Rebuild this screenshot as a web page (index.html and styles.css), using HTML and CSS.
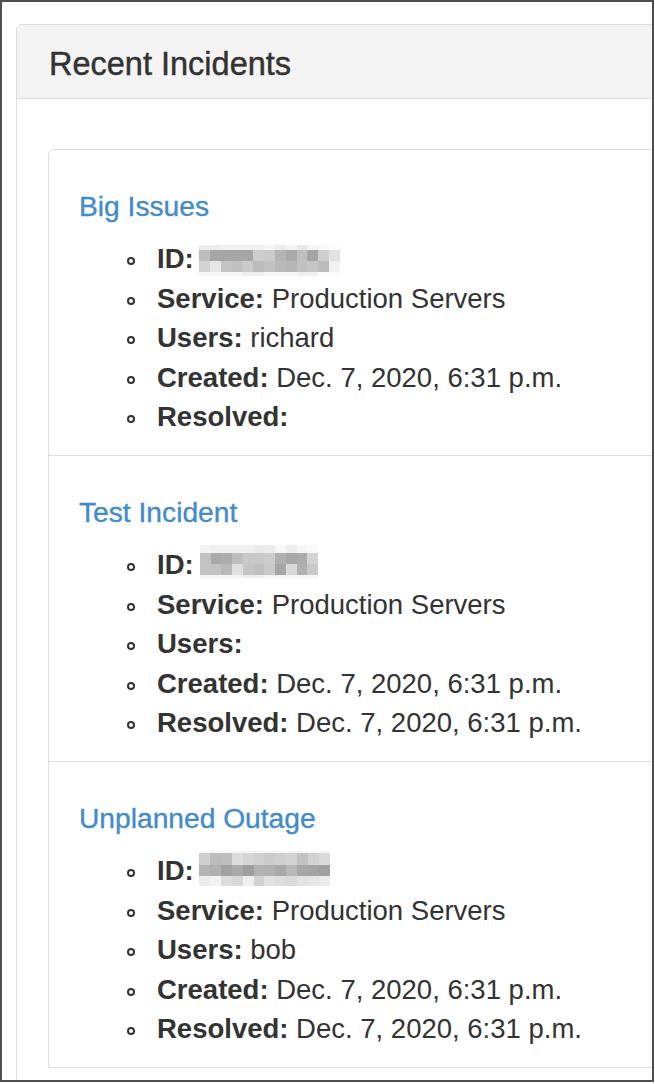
FILE: index.html
```html
<!DOCTYPE html>
<html lang="en">
<head>
<meta charset="utf-8">
<title>Recent Incidents</title>
<link rel="stylesheet" href="styles.css">
</head>
<body>
<div class="frame">
  <div class="panel">
    <div class="panel-heading">
      <h3 class="panel-title">Recent Incidents</h3>
    </div>
    <div class="panel-body">
      <div class="list-group">
        <div class="list-group-item">
          <h4 class="incident-title"><a href="#">Big Issues</a></h4>
          <ul class="incident-details">
            <li><strong>ID:</strong> <span class="redacted redacted-1"></span></li>
            <li><strong>Service:</strong> Production Servers</li>
            <li><strong>Users:</strong> richard</li>
            <li><strong>Created:</strong> Dec. 7, 2020, 6:31 p.m.</li>
            <li><strong>Resolved:</strong> </li>
          </ul>
        </div>
        <div class="list-group-item">
          <h4 class="incident-title"><a href="#">Test Incident</a></h4>
          <ul class="incident-details">
            <li><strong>ID:</strong> <span class="redacted redacted-2"></span></li>
            <li><strong>Service:</strong> Production Servers</li>
            <li><strong>Users:</strong> </li>
            <li><strong>Created:</strong> Dec. 7, 2020, 6:31 p.m.</li>
            <li><strong>Resolved:</strong> Dec. 7, 2020, 6:31 p.m.</li>
          </ul>
        </div>
        <div class="list-group-item">
          <h4 class="incident-title"><a href="#">Unplanned Outage</a></h4>
          <ul class="incident-details">
            <li><strong>ID:</strong> <span class="redacted redacted-3"></span></li>
            <li><strong>Service:</strong> Production Servers</li>
            <li><strong>Users:</strong> bob</li>
            <li><strong>Created:</strong> Dec. 7, 2020, 6:31 p.m.</li>
            <li><strong>Resolved:</strong> Dec. 7, 2020, 6:31 p.m.</li>
          </ul>
        </div>
      </div>
    </div>
  </div>
</div>
</body>
</html>
```

FILE: styles.css
```css
html, body {
  margin: 0;
  padding: 0;
  background: #fff;
}

body {
  font-family: "Liberation Sans", Arial, Helvetica, sans-serif;
  color: #333;
}

.frame {
  box-sizing: border-box;
  width: 654px;
  height: 1082px;
  border: 2px solid #505050;
  background: #fff;
  overflow: hidden;
  padding: 22px 0 0 14px;
}

.panel {
  width: 700px;
  border: 1px solid #dddddd;
  border-radius: 6px 0 0 0;
  background: #fff;
}

.panel-heading {
  background: #f4f4f4;
  border-bottom: 1px solid #dddddd;
  border-radius: 5px 0 0 0;
  padding: 22px 30px 16px 32px;
}

.panel-title {
  margin: 0;
  font-size: 32.5px;
  line-height: 35px;
  font-weight: 400;
  color: #333;
  -webkit-text-stroke: 0.45px #333;
}

.panel-body {
  padding: 50px 0 40px 31px;
}

.list-group {
  display: flex;
  flex-direction: column;
}

.list-group-item {
  border: 1px solid #dddddd;
  margin-bottom: -1px;
  padding: 20px 30px 18px 30px;
  font-size: 27.5px;
}

.list-group-item:first-child {
  border-radius: 6px 0 0 0;
}

.incident-title {
  margin: 21px 0 18px;
  font-size: 28.2px;
  line-height: 30px;
  font-weight: 400;
  -webkit-text-stroke: 0.35px #428bca;
}

.incident-title a {
  color: #428bca;
  text-decoration: none;
}

.incident-details {
  list-style: none;
  margin: 0;
  padding: 0 0 0 78px;
  line-height: 39.6px;
}

.incident-details li {
  position: relative;
  white-space: nowrap;
}

.incident-details li::before {
  content: "";
  position: absolute;
  left: -30px;
  top: 18px;
  width: 8px;
  height: 8px;
  box-sizing: border-box;
  border: 2px solid #333;
  border-radius: 50%;
}

.incident-details strong {
  font-weight: 700;
}

.redacted {
  display: inline-block;
  vertical-align: top;
  background-repeat: no-repeat;
}

.redacted-1 {
  width: 141px;
  height: 31px;
  margin-top: 6px;
  margin-left: -2px;
  background-image:
    linear-gradient(90deg, #ececec 0 15.38%, #f0f0f0 15.38% 46.15%, #f5f5f5 46.15% 53.85%, #ececec 53.85% 61.54%, #f3f3f3 61.54% 69.23%, #e8e8e8 69.23% 76.92%, #f5f5f5 76.92% 84.62%, #f8f8f8 84.62% 92.31%, #fdfdfd 92.31% 100%),
    linear-gradient(90deg, #bdbdbd 0 7.69%, #a6a6a6 7.69% 38.46%, #cdcdcd 38.46% 46.15%, #cbcbcb 46.15% 53.85%, #b4b4b4 53.85% 61.54%, #a9a9a9 61.54% 69.23%, #c0c0c0 69.23% 76.92%, #a5a5a5 76.92% 84.62%, #cfcfcf 84.62% 92.31%, #e2e2e2 92.31% 100%),
    linear-gradient(90deg, #d2d2d2 0 7.69%, #e6e6e6 7.69% 15.38%, #c3c3c3 15.38% 23.08%, #c0c0c0 23.08% 30.77%, #cbcbcb 30.77% 38.46%, #bcbcbc 38.46% 46.15%, #c2c2c2 46.15% 53.85%, #bababa 53.85% 61.54%, #b7b7b7 61.54% 69.23%, #c1c1c1 69.23% 76.92%, #c6c6c6 76.92% 84.62%, #bcbcbc 84.62% 92.31%, #f2f2f2 92.31% 100%),
    linear-gradient(90deg, #f6f6f6 0 30.77%, #efefef 30.77% 46.15%, #f6f6f6 46.15% 69.23%, #f0f0f0 69.23% 84.62%, #fbfbfb 84.62% 100%);
  background-size: 100% 5px, 100% 11px, 100% 11px, 100% 4px;
  background-position: 0 0, 0 5px, 0 16px, 0 27px;
}

.redacted-2 {
  width: 118px;
  height: 33px;
  margin-top: 0;
  margin-left: -1px;
  background-image:
    linear-gradient(90deg, #f3f3f3 0 9.09%, #f0f0f0 9.09% 45.45%, #eaeaea 45.45% 54.55%, #ececec 54.55% 63.64%, #f6f6f6 63.64% 72.73%, #ededed 72.73% 81.82%, #f5f5f5 81.82% 90.91%, #fafafa 90.91% 100%),
    linear-gradient(90deg, #c2c2c2 0 9.09%, #a9a9a9 9.09% 18.18%, #acacac 18.18% 27.27%, #bebebe 27.27% 36.36%, #c9c9c9 36.36% 54.55%, #cdcdcd 54.55% 63.64%, #b0b0b0 63.64% 72.73%, #a8a8a8 72.73% 81.82%, #ababab 81.82% 90.91%, #d4d4d4 90.91% 100%),
    linear-gradient(90deg, #c4c4c4 0 9.09%, #c3c3c3 9.09% 18.18%, #b8b8b8 18.18% 27.27%, #e0e0e0 27.27% 36.36%, #c5c5c5 36.36% 45.45%, #c0c0c0 45.45% 54.55%, #c9c9c9 54.55% 63.64%, #a5a5a5 63.64% 72.73%, #dadada 72.73% 81.82%, #b1b1b1 81.82% 90.91%, #c9c9c9 90.91% 100%),
    linear-gradient(90deg, #f4f4f4 0 36.36%, #eeeeee 36.36% 54.55%, #f5f5f5 54.55% 100%);
  background-size: 100% 8px, 100% 11px, 100% 11px, 100% 3px;
  background-position: 0 0, 0 8px, 0 19px, 0 30px;
}

.redacted-3 {
  width: 131px;
  height: 36px;
  margin-top: 0;
  margin-left: -2px;
  background-image:
    linear-gradient(90deg, #f5f5f5 0 100%),
    linear-gradient(90deg, #cfcfcf 0 8.33%, #bcbcbc 8.33% 16.67%, #bebebe 16.67% 25%, #dcdcdc 25% 33.33%, #d5d5d5 33.33% 41.67%, #d0d0d0 41.67% 50%, #cbcbcb 50% 58.33%, #cfcfcf 58.33% 66.67%, #d3d3d3 66.67% 75%, #c2c2c2 75% 83.33%, #d2d2d2 83.33% 91.67%, #dadada 91.67% 100%),
    linear-gradient(90deg, #b5b5b5 0 8.33%, #b0b0b0 8.33% 16.67%, #a2a2a2 16.67% 25%, #ababab 25% 33.33%, #9f9f9f 33.33% 41.67%, #b3b3b3 41.67% 50%, #b0b0b0 50% 58.33%, #a9a9a9 58.33% 66.67%, #b8b8b8 66.67% 75%, #a7a7a7 75% 83.33%, #a5a5a5 83.33% 91.67%, #a0a0a0 91.67% 100%),
    linear-gradient(90deg, #ececec 0 8.33%, #f3f3f3 8.33% 16.67%, #dcdcdc 16.67% 25%, #d7d7d7 25% 33.33%, #f0f0f0 33.33% 41.67%, #d2d2d2 41.67% 50%, #e1e1e1 50% 58.33%, #dedede 58.33% 66.67%, #d9d9d9 66.67% 75%, #e3e3e3 75% 83.33%, #e6e6e6 83.33% 91.67%, #ececec 91.67% 100%);
  background-size: 100% 2px, 100% 12px, 100% 11px, 100% 10px;
  background-position: 0 0, 0 2px, 0 14px, 0 25px;
}
```
